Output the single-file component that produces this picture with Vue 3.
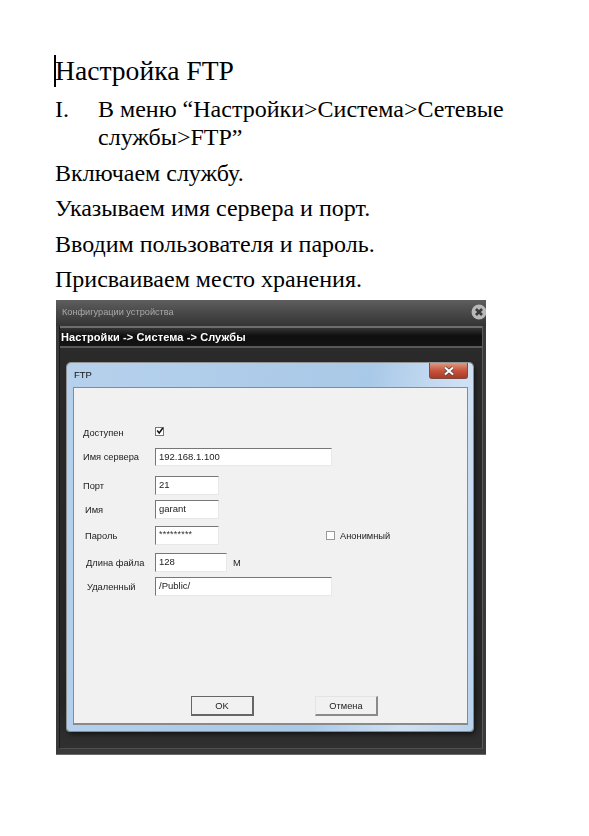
<script setup>
const lines = [
  'Включаем службу.',
  'Указываем имя сервера и порт.',
  'Вводим пользователя и пароль.',
  'Присваиваем место хранения.',
]
</script>

<template>
  <main class="page">
    <h1 class="title"><span class="caret"></span>Настройка FTP</h1>
    <div class="list-item">
      <span class="marker">I.</span>
      <p class="list-text">В меню “Настройки&gt;Система&gt;Сетевые службы&gt;FTP”</p>
    </div>
    <p v-for="line in lines" :key="line" class="para">{{ line }}</p>

    <section class="shot">
      <header class="win-title">
        <span>Конфигурации устройства</span>
        <svg class="win-close" viewBox="0 0 16 16" width="16" height="16">
          <circle cx="8" cy="8" r="7.5" fill="#b8b8b8" />
          <path d="M5 5l6 6M11 5l-6 6" stroke="#3a3a3a" stroke-width="2.6" />
        </svg>
      </header>
      <div class="win-body">
        <div class="crumbs">Настройки -&gt; Система -&gt; Службы</div>

        <div class="dialog">
          <div class="dlg-title">
            <span class="dlg-name">FTP</span>
            <span class="dlg-close">
              <svg viewBox="0 0 12 10" width="12" height="10">
                <path d="M2 1.5l8 7M10 1.5l-8 7" stroke="#3a3a3a" stroke-width="3.4" />
                <path d="M2 1.5l8 7M10 1.5l-8 7" stroke="#fff" stroke-width="2.2" />
              </svg>
            </span>
          </div>
          <div class="client">
            <div class="row r-enabled">
              <label class="lbl">Доступен</label>
              <span class="check on">
                <svg viewBox="0 0 8 8" width="8" height="8"><path d="M1.2 3.6l2 2.4 3.6-5" fill="none" stroke="#111" stroke-width="1.5" /></svg>
              </span>
            </div>
            <div class="row r-server">
              <label class="lbl">Имя сервера</label>
              <span class="input wide">192.168.1.100</span>
            </div>
            <div class="row r-port">
              <label class="lbl">Порт</label>
              <span class="input short">21</span>
            </div>
            <div class="row r-name">
              <label class="lbl l1">Имя</label>
              <span class="input short">garant</span>
            </div>
            <div class="row r-pass">
              <label class="lbl l1">Пароль</label>
              <span class="input short stars">*********</span>
              <span class="check anon"></span>
              <span class="anon-label">Анонимный</span>
            </div>
            <div class="row r-len">
              <label class="lbl l2">Длина файла</label>
              <span class="input mid">128</span>
              <span class="unit">М</span>
            </div>
            <div class="row r-remote">
              <label class="lbl l3">Удаленный</label>
              <span class="input wide">/Public/</span>
            </div>
            <div class="buttons">
              <button class="btn ok" type="button">OK</button>
              <button class="btn" type="button">Отмена</button>
            </div>
          </div>
        </div>
      </div>
    </section>
  </main>
</template>

<style>
html, body { margin: 0; background: #fff; }
</style>

<style scoped>
.page {
  box-sizing: border-box;
  width: 589px;
  height: 836px;
  padding: 53px 0 0 55px;
  overflow: hidden;
  background: #fff;
  color: #000;
  font-family: "Liberation Serif", serif;
}
.title {
  position: relative;
  margin: 0;
  font-weight: 400;
  font-size: 27.6px;
  line-height: 36px;
}
.caret {
  position: absolute;
  left: -1px;
  top: 2px;
  width: 1.5px;
  height: 32px;
  background: #000;
}
.list-item {
  display: flex;
  margin-top: 6px;
  font-size: 24px;
  line-height: 28px;
}
.marker { width: 43px; flex: none; }
.list-text { margin: 0; width: 420px; }
.para {
  margin: 7.5px 0 0;
  font-size: 24px;
  line-height: 28px;
}

.shot {
  box-sizing: border-box;
  width: 430px;
  height: 455px;
  margin-top: 7px;
  margin-left: 1px;
  padding-bottom: 5px;
  background: #3a3a3a;
  border-bottom: 1px solid #6a6a6a;
  font-family: "Liberation Sans", sans-serif;
  overflow: hidden;
  filter: blur(0.35px);
}
.win-title {
  box-sizing: border-box;
  display: flex;
  align-items: center;
  justify-content: space-between;
  height: 26px;
  padding: 0 0 3px 6px;
  font-size: 9.2px;
  color: #a8a8a8;
  background: linear-gradient(#5e5e5e, #484848 50%, #343434);
}
.win-close { margin: 1px -1px 0 0; }
.win-body {
  box-sizing: border-box;
  height: 423px;
  margin: 0 3px 0 3px;
  background: linear-gradient(#2b2b2b, #262626 90%, #303030);
  border-left: 1px solid #1a1a1a;
  border-right: 1px solid #5a5a5a;
  border-bottom: 1px solid #4e4e4e;
}
.crumbs {
  box-sizing: border-box;
  height: 22px;
  padding: 0 0 0 1px;
  border-top: 2px solid #6d6d6d;
  border-bottom: 2px solid #595959;
  background: linear-gradient(#333, #0f0f0f 45%, #141414);
  color: #fff;
  font-size: 11px;
  font-weight: 700;
  line-height: 18px;
  letter-spacing: 0.1px;
}
.dialog {
  box-sizing: border-box;
  width: 406px;
  height: 368px;
  margin: 15px 0 0 7px;
  padding: 0 5px 5px 6px;
  border-radius: 4px 4px 3px 3px;
  background: linear-gradient(100deg, #b6d1ec, #a9c9e8 65%, #cfe1f4 85%, #b8d2ec);
  box-shadow: 0 0 0 1px rgba(255,255,255,.5), 2px 3px 5px rgba(0,0,0,.6);
}
.dlg-title {
  display: flex;
  align-items: flex-start;
  justify-content: space-between;
  height: 24px;
  font-size: 9.5px;
  line-height: 24px;
  color: #111;
}
.dlg-name { margin-left: 1px; }
.dlg-close {
  display: flex;
  align-items: center;
  justify-content: center;
  width: 39px;
  height: 16px;
  border: 1px solid #7d4a42;
  border-top: 0;
  border-radius: 0 0 3px 3px;
  box-sizing: border-box;
  background: linear-gradient(#dd9a86, #c9553c 50%, #a83a26);
}
.client {
  box-sizing: border-box;
  height: 338px;
  padding-top: 39px;
  border: 1px solid #8a8a8a;
  border-width: 1px 1px 2px;
  background: #f0f1f0;
  color: #222;
  font-size: 9.3px;
}
.row {
  display: flex;
  align-items: center;
  height: 19px;
}
.lbl { width: 81px; padding-left: 9px; box-sizing: border-box; flex: none; }
.l1 { padding-left: 11px; }
.l2 { padding-left: 12px; }
.l3 { padding-left: 13px; }
.r-enabled { height: 10px; }
.r-enabled .lbl { padding-top: 2px; }
.r-server { margin-top: 11px; height: 18px; }
.r-port { margin-top: 10px; }
.r-name { margin-top: 5px; }
.r-pass { margin-top: 7px; }
.r-len { margin-top: 8px; }
.r-remote { margin-top: 5px; }
.input {
  box-sizing: border-box;
  display: block;
  height: 100%;
  padding: 0 0 2px 3px;
  border: 1px solid #e8e8e8;
  border-top: 1px solid #777;
  border-left: 1px solid #777;
  background: #fff;
  line-height: 15px;
  font-size: 9.5px;
}
.wide { width: 177px; }
.short { width: 64px; }
.mid { width: 72px; }
.stars { font-size: 9px; color: #333; letter-spacing: 0.2px; }
.unit { margin-left: 6px; }
.check {
  box-sizing: border-box;
  display: block;
  width: 9px;
  height: 9px;
  border: 1px solid #777;
  background: #fff;
}
.check svg { display: block; margin: -0.5px; }
.on { margin-top: -2px; }
.anon { margin: 0 0 0 107px; border-color: #999; }
.anon-label { margin-left: 5px; }
.buttons {
  display: flex;
  gap: 61px;
  margin: 100px 0 0 117px;
}
.btn {
  box-sizing: border-box;
  width: 63px;
  height: 20px;
  padding: 0;
  border: 1px solid #8a8a8a;
  border-top-color: #e4e4e4;
  border-left-color: #e4e4e4;
  border-right-width: 2px;
  border-bottom-width: 2px;
  background: #f0f1f0;
  color: #222;
  font: 9.3px "Liberation Sans", sans-serif;
}
.ok {
  border: 1px solid #666;
  border-right-width: 2px;
  border-bottom-width: 2px;
}
</style>
